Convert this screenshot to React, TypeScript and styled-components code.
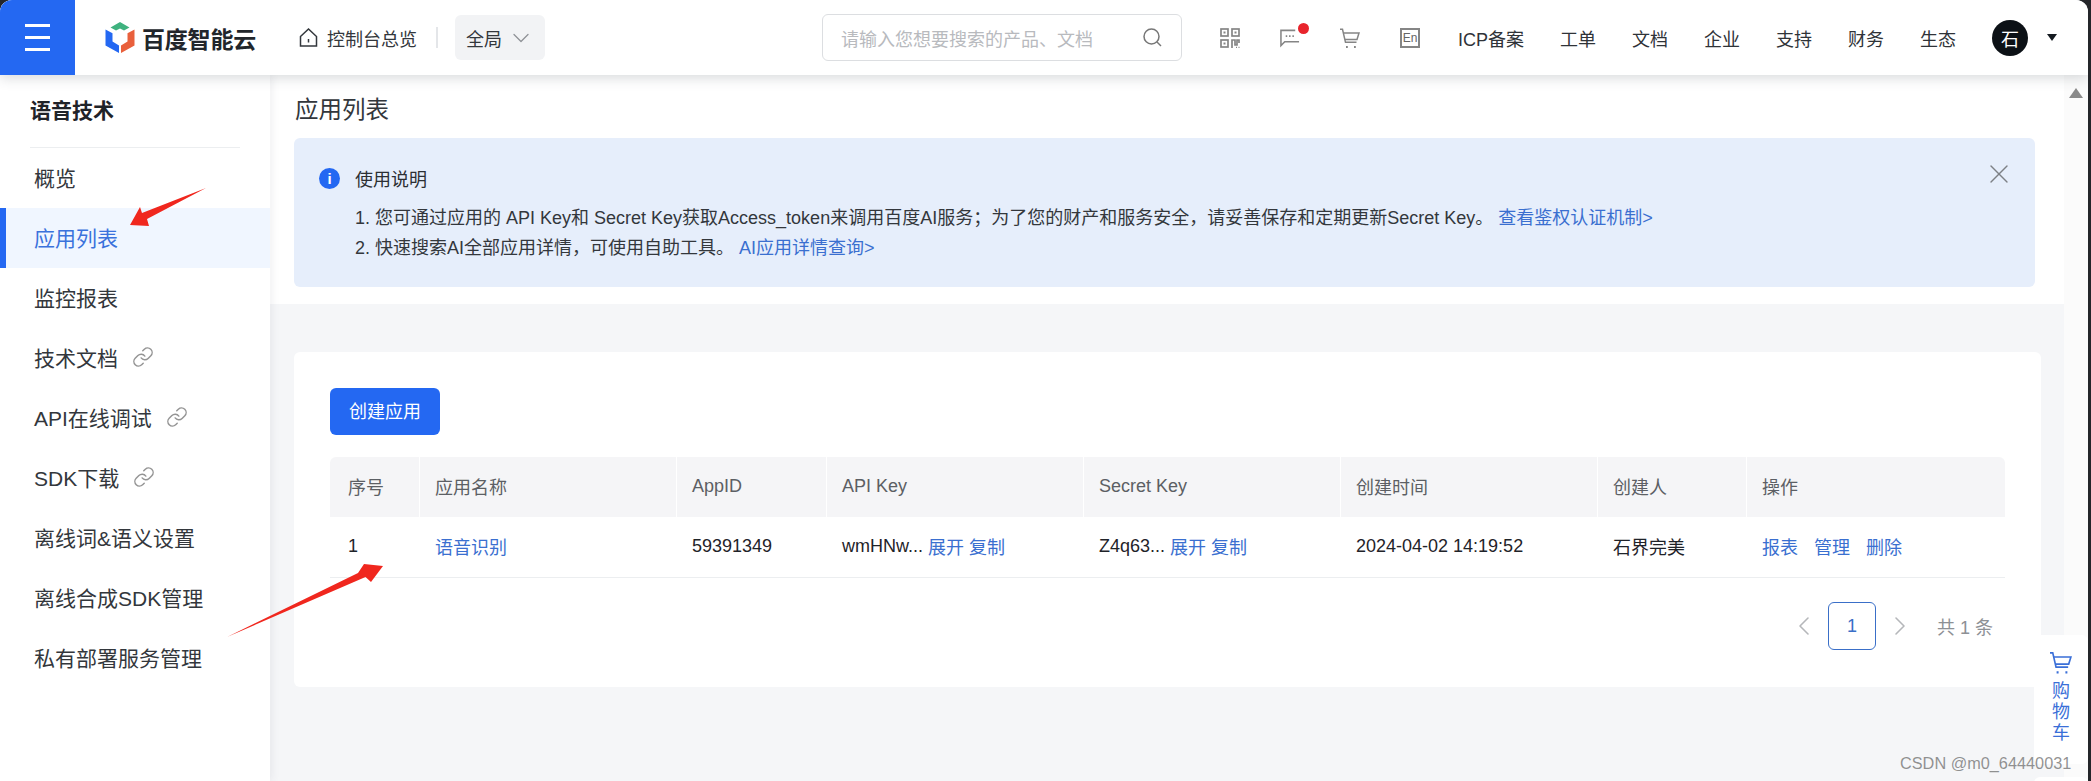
import React from 'react';
import styled, { createGlobalStyle } from 'styled-components';
import { Link as LinkIcon, X, ChevronLeft, ChevronRight, ChevronDown } from 'lucide-react';

const Global = createGlobalStyle`
  html, body { margin: 0; padding: 0; background: #24262a; }
  #root { width: 2091px; height: 781px; overflow: hidden; }
  * { box-sizing: border-box; }
`;

const FONT = `"Liberation Sans", "Noto Sans CJK SC", sans-serif`;
const BLUE = '#2468f2';
const LINK = '#3a6fd0';
const TEXT = '#2c2f33';

const Page = styled.div`
  position: relative;
  width: 2088px;
  height: 781px;
  display: flex;
  flex-direction: column;
  overflow: hidden;
  border-radius: 12px 12px 0 0;
  font-family: ${FONT};
  color: ${TEXT};
  background: #f5f6f8;
`;

const Header = styled.header`
  position: relative;
  z-index: 3;
  flex: 0 0 75px;
  display: flex;
  align-items: center;
  background: #fff;
  box-shadow: 0 3px 12px rgba(60, 70, 80, 0.2);
`;

const Burger = styled.div`
  width: 75px;
  height: 75px;
  background: ${BLUE};
  display: flex;
  flex-direction: column;
  justify-content: center;
  gap: 9px;
  padding: 0 25px;
`;

const BurgerLine = styled.span`
  display: block;
  height: 3px;
  background: #fff;
`;

const Brand = styled.div`
  display: flex;
  align-items: center;
  margin-left: 30px;
  gap: 7px;
  width: 160px;
`;

const BrandText = styled.span`
  font-size: 23px;
  font-weight: 700;
  color: #22262b;
  white-space: nowrap;
  letter-spacing: -0.2px;
`;

const Overview = styled.div`
  display: flex;
  align-items: center;
  gap: 9px;
  margin-left: 34px;
  font-size: 18px;
  color: #33373c;
  white-space: nowrap;
`;

const VDivider = styled.span`
  width: 2px;
  height: 21px;
  background: #e4e6e9;
  margin-left: 19px;
`;

const Scope = styled.div`
  display: flex;
  align-items: center;
  width: 90px;
  height: 45px;
  margin-left: 17px;
  padding-left: 11px;
  gap: 5px;
  background: #f2f3f5;
  border-radius: 6px;
  font-size: 18px;
  color: #33373c;
`;

const Search = styled.div`
  display: flex;
  align-items: center;
  justify-content: space-between;
  width: 360px;
  height: 47px;
  margin-left: 277px;
  padding: 0 19px 0 18px;
  border: 1.5px solid #dcdee1;
  border-radius: 6px;
  font-size: 18px;
  color: #b8babe;
  white-space: nowrap;
`;

const ToolIcons = styled.div`
  display: flex;
  align-items: center;
  gap: 40px;
  margin-left: 38px;
`;

const ToolSlot = styled.div`
  position: relative;
  width: 20px;
  height: 20px;
  display: flex;
`;

const Dot = styled.span`
  position: absolute;
  left: 18px;
  top: -5px;
  width: 11px;
  height: 11px;
  border-radius: 50%;
  background: #e8242c;
`;

const EnBox = styled.span`
  width: 20px;
  height: 20px;
  border: 2px solid #858585;
  font-size: 12px;
  line-height: 16px;
  text-align: center;
  color: #666;
`;

const NavList = styled.nav`
  display: flex;
  align-items: center;
  gap: 36px;
  margin-left: 38px;
  font-size: 18px;
  color: #2f3338;
  white-space: nowrap;
`;

const Avatar = styled.div`
  width: 36px;
  height: 36px;
  margin-left: 36px;
  border-radius: 50%;
  background: #0c1116;
  color: #fff;
  font-size: 18px;
  display: flex;
  align-items: center;
  justify-content: center;
`;

const Caret = styled.span`
  width: 0;
  height: 0;
  margin-left: 19px;
  border-left: 5.5px solid transparent;
  border-right: 5.5px solid transparent;
  border-top: 7px solid #151a20;
`;

const Body = styled.div`
  flex: 1;
  min-height: 0;
  display: flex;
`;

const Sidebar = styled.aside`
  position: relative;
  z-index: 2;
  flex: 0 0 270px;
  background: #fff;
  box-shadow: 2px 0 8px rgba(60, 70, 90, 0.08);
`;

const SideTitle = styled.div`
  margin: 0 30px;
  height: 73px;
  line-height: 72px;
  font-size: 21px;
  font-weight: 700;
  color: #1f2329;
  border-bottom: 1.5px solid #eceef0;
`;

const SideItems = styled.ul`
  list-style: none;
  margin: 0;
  padding: 0;
`;

const SideItem = styled.li<{ $active?: boolean }>`
  display: flex;
  align-items: center;
  height: 60px;
  padding-left: ${(p) => (p.$active ? 28 : 34)}px;
  padding-bottom: 3px;
  gap: 14px;
  font-size: 21px;
  white-space: nowrap;
  color: ${(p) => (p.$active ? '#3a72dc' : '#33373c')};
  background: ${(p) => (p.$active ? '#f0f6ff' : 'transparent')};
  border-left: ${(p) => (p.$active ? `6px solid ${BLUE}` : 'none')};
`;

const Main = styled.main`
  flex: 1;
  min-width: 0;
  display: flex;
  flex-direction: column;
`;

const TopPanel = styled.section`
  height: 229px;
  padding: 0 29px 0 24px;
  background: #fff;
`;

const PageTitle = styled.h1`
  margin: 0 0 0 1px;
  height: 63px;
  line-height: 70px;
  font-size: 23.5px;
  font-weight: 400;
  color: #33373c;
`;

const Notice = styled.div`
  position: relative;
  height: 149px;
  padding: 26px 0 0 25px;
  background: #e6eefb;
  border-radius: 6px;
  font-size: 18px;
`;

const NoticeHead = styled.div`
  display: flex;
  align-items: center;
  gap: 15px;
  height: 28px;
`;

const InfoDot = styled.span`
  width: 21px;
  height: 21px;
  border-radius: 50%;
  background: ${BLUE};
  color: #fff;
  font-size: 15px;
  font-weight: 700;
  line-height: 21px;
  text-align: center;
`;

const NoticeBody = styled.div`
  margin: 11px 0 0 36px;
`;

const NoticeLine = styled.div`
  height: 30px;
  line-height: 30px;
  white-space: nowrap;
  color: #33373c;
`;

const Anchor = styled.a`
  color: ${LINK};
  text-decoration: none;
`;

const CloseBtn = styled.span`
  position: absolute;
  right: 20px;
  top: 20px;
  display: flex;
  color: #7d8085;
`;

const Card = styled.section`
  height: 335px;
  margin: 48px 23px 0 24px;
  padding: 36px 36px 0;
  background: #fff;
  border-radius: 6px;
  position: relative;
`;

const CreateBtn = styled.button`
  display: block;
  width: 110px;
  height: 47px;
  border: 0;
  padding: 0 0 3px;
  border-radius: 6px;
  background: ${BLUE};
  color: #fff;
  font-family: inherit;
  font-size: 18px;
`;

const Table = styled.div`
  margin-top: 22px;
  width: 1675px;
  font-size: 18px;
`;

const Row = styled.div`
  display: grid;
  grid-template-columns: 89px 257px 150px 257px 257px 257px 149px 259px;
`;

const HeadRow = styled(Row)`
  height: 60px;
  background: #f5f5f7;
  border-radius: 6px 6px 0 0;
  color: #5c5f64;
`;

const DataRow = styled(Row)`
  height: 61px;
  border-bottom: 1.5px solid #eceef0;
  color: #1f2329;
`;

const HeadCell = styled.div<{ $first?: boolean }>`
  display: flex;
  align-items: center;
  padding-left: ${(p) => (p.$first ? 18 : 15)}px;
  padding-bottom: 2px;
  border-left: ${(p) => (p.$first ? 'none' : '1.5px solid #fff')};
`;

const Cell = styled.div<{ $first?: boolean }>`
  display: flex;
  align-items: center;
  gap: 5px;
  white-space: nowrap;
  padding-left: ${(p) => (p.$first ? 18 : 16)}px;
  padding-bottom: 2px;
`;

const ActionCell = styled(Cell)`
  gap: 16px;
`;

const Pager = styled.div`
  display: flex;
  align-items: center;
  justify-content: flex-end;
  height: 48px;
  margin-top: 24px;
  color: #8d9095;
  font-size: 18px;
`;

const PagerArrow = styled.span`
  display: flex;
  color: #b5b7ba;
`;

const PageNo = styled.span`
  width: 48px;
  height: 48px;
  margin: 0 8px;
  border: 1.5px solid #3a6fc8;
  border-radius: 6px;
  color: #3a6fc8;
  display: flex;
  align-items: center;
  justify-content: center;
`;

const PagerTotal = styled.span`
  margin-left: 21px;
  margin-right: 12px;
  white-space: pre;
`;

const Gutter = styled.div`
  flex: 0 0 24px;
  background: #fbfbfb;
  display: flex;
  justify-content: center;
  padding-top: 13px;
`;

const ScrollUp = styled.span`
  width: 0;
  height: 0;
  border-left: 7.5px solid transparent;
  border-right: 7.5px solid transparent;
  border-bottom: 10px solid #8a8a8a;
`;

const FloatCart = styled.div`
  position: absolute;
  z-index: 4;
  left: 2034px;
  top: 635px;
  width: 54px;
  height: 129px;
  background: #fff;
  border-radius: 6px;
  display: flex;
  flex-direction: column;
  align-items: center;
  padding-top: 17px;
  color: #3a6fd8;
  font-size: 18px;
  line-height: 21px;
`;

const FloatText = styled.div`
  margin-top: 7px;
  width: 18px;
  text-align: center;
`;

const FloatNext = styled.div`
  position: absolute;
  z-index: 4;
  left: 2034px;
  top: 777px;
  width: 54px;
  height: 30px;
  background: #fff;
  border-radius: 6px;
`;

const Watermark = styled.div`
  position: absolute;
  z-index: 6;
  left: 1900px;
  top: 753px;
  font-size: 16.3px;
  line-height: 20px;
  color: rgba(110, 110, 110, 0.75);
  white-space: nowrap;
`;

const Annotations = styled.svg`
  position: absolute;
  z-index: 5;
  left: 0;
  top: 0;
  pointer-events: none;
`;

const Logo = () => (
  <svg width="30" height="33" viewBox="0 0 30 33">
    <path d="M15 1l9.500 5.500-5.500 3L15 7.500l-4 2-5.500-3z" fill="#3fb27f" />
    <path d="M.5 8.500l7 3.800v8.200l6.500 4V32L.5 24.500z" fill="#2468f2" />
    <path d="M29.500 8.500l-7 3.800v8.200L16 24.500V32l13.500-7.500z" fill="#e9603c" />
  </svg>
);

const HomeIcon = () => (
  <svg width="19" height="19" viewBox="0 0 19 19" fill="none" stroke="#33373c" strokeWidth="1.500">
    <path d="M1.500 8.500L9.500 1l8 7.500V18h-16z" />
    <path d="M9.500 11v3.500" />
  </svg>
);

const SearchIcon = () => (
  <svg width="19" height="19" viewBox="0 0 19 19" fill="none" stroke="#777" strokeWidth="1.500">
    <circle cx="8.500" cy="8.500" r="7.500" />
    <path d="M14 14l4 4" />
  </svg>
);

const QrIcon = () => (
  <svg width="20" height="20" viewBox="0 0 20 20" fill="none" stroke="#858585" strokeWidth="1.700">
    <rect x="1" y="1" width="7" height="7" />
    <rect x="12" y="1" width="7" height="7" />
    <rect x="1" y="12" width="7" height="7" />
    <path d="M12 20v-8h3v5h2v-5h2v3" />
    <path d="M16 19.500h1M18.500 19.500h1" />
    <rect x="3.500" y="3.500" width="2" height="2" fill="#858585" stroke="none" />
    <rect x="14.500" y="3.500" width="2" height="2" fill="#858585" stroke="none" />
    <rect x="3.500" y="14.500" width="2" height="2" fill="#858585" stroke="none" />
  </svg>
);

const ChatIcon = () => (
  <svg width="21" height="20" viewBox="0 0 21 20" fill="none" stroke="#858585" strokeWidth="1.600">
    <path d="M20 14H5l-4 4V2h15" />
    <path d="M6 8h1.600M9.500 8h1.600M13 8h1.600" strokeWidth="2" />
  </svg>
);

const CartIcon = ({ color, size }: { color: string; size: number }) => (
  <svg width={size} height={size} viewBox="0 0 20 20" fill="none" stroke={color} strokeWidth="1.500">
    <path d="M0 .8h2.500l3 13h11" />
    <path d="M3.500 4.500h15.500l-2 6.500H5" />
    <path d="M6 18.500h1.800M14 18.500h1.800" strokeWidth="2" />
  </svg>
);

const Chain = () => <LinkIcon size={22} color="#949494" strokeWidth={1.6} />;

const nav = ['ICP备案', '工单', '文档', '企业', '支持', '财务', '生态'];
const heads = ['序号', '应用名称', 'AppID', 'API Key', 'Secret Key', '创建时间', '创建人', '操作'];

export default function App() {
  return (
    <>
      <Global />
      <Page>
        <Header>
          <Burger>
            <BurgerLine />
            <BurgerLine />
            <BurgerLine />
          </Burger>
          <Brand>
            <Logo />
            <BrandText>百度智能云</BrandText>
          </Brand>
          <Overview>
            <HomeIcon />
            控制台总览
          </Overview>
          <VDivider />
          <Scope>
            全局
            <ChevronDown size={28} color="#8f9297" strokeWidth={1.1} />
          </Scope>
          <Search>
            请输入您想要搜索的产品、文档
            <SearchIcon />
          </Search>
          <ToolIcons>
            <ToolSlot><QrIcon /></ToolSlot>
            <ToolSlot><ChatIcon /><Dot /></ToolSlot>
            <ToolSlot><CartIcon color="#858585" size={21} /></ToolSlot>
            <ToolSlot><EnBox>En</EnBox></ToolSlot>
          </ToolIcons>
          <NavList>
            {nav.map((n) => (
              <span key={n}>{n}</span>
            ))}
          </NavList>
          <Avatar>石</Avatar>
          <Caret />
        </Header>
        <Body>
          <Sidebar>
            <SideTitle>语音技术</SideTitle>
            <SideItems>
              <SideItem>概览</SideItem>
              <SideItem $active>应用列表</SideItem>
              <SideItem>监控报表</SideItem>
              <SideItem>技术文档<Chain /></SideItem>
              <SideItem>API在线调试<Chain /></SideItem>
              <SideItem>SDK下载<Chain /></SideItem>
              <SideItem>离线词&amp;语义设置</SideItem>
              <SideItem>离线合成SDK管理</SideItem>
              <SideItem>私有部署服务管理</SideItem>
            </SideItems>
          </Sidebar>
          <Main>
            <TopPanel>
              <PageTitle>应用列表</PageTitle>
              <Notice>
                <NoticeHead>
                  <InfoDot>i</InfoDot>
                  使用说明
                </NoticeHead>
                <NoticeBody>
                  <NoticeLine>
                    1. 您可通过应用的 API Key和 Secret Key获取Access_token来调用百度AI服务；为了您的财产和服务安全，请妥善保存和定期更新Secret Key。{' '}
                    <Anchor>查看鉴权认证机制&gt;</Anchor>
                  </NoticeLine>
                  <NoticeLine>
                    2. 快速搜索AI全部应用详情，可使用自助工具。 <Anchor>AI应用详情查询&gt;</Anchor>
                  </NoticeLine>
                </NoticeBody>
                <CloseBtn><X size={32} strokeWidth={1} /></CloseBtn>
              </Notice>
            </TopPanel>
            <Card>
              <CreateBtn>创建应用</CreateBtn>
              <Table>
                <HeadRow>
                  {heads.map((h, i) => (
                    <HeadCell key={h} $first={i === 0}>{h}</HeadCell>
                  ))}
                </HeadRow>
                <DataRow>
                  <Cell $first>1</Cell>
                  <Cell><Anchor>语音识别</Anchor></Cell>
                  <Cell>59391349</Cell>
                  <Cell>wmHNw...<Anchor>展开</Anchor><Anchor>复制</Anchor></Cell>
                  <Cell>Z4q63...<Anchor>展开</Anchor><Anchor>复制</Anchor></Cell>
                  <Cell>2024-04-02 14:19:52</Cell>
                  <Cell>石界完美</Cell>
                  <ActionCell>
                    <Anchor>报表</Anchor>
                    <Anchor>管理</Anchor>
                    <Anchor>删除</Anchor>
                  </ActionCell>
                </DataRow>
                <Pager>
                  <PagerArrow><ChevronLeft size={32} strokeWidth={1.2} /></PagerArrow>
                  <PageNo>1</PageNo>
                  <PagerArrow><ChevronRight size={32} strokeWidth={1.2} /></PagerArrow>
                  <PagerTotal>共 1 条</PagerTotal>
                </Pager>
              </Table>
            </Card>
          </Main>
          <Gutter><ScrollUp /></Gutter>
        </Body>
        <FloatCart>
          <CartIcon color="#3a6fd8" size={22} />
          <FloatText>购物车</FloatText>
        </FloatCart>
        <FloatNext />
        <Annotations width="2088" height="781" viewBox="0 0 2088 781">
          <path d="M206 188L142 213l-2-6-10 18 19 1-2-7z" fill="#f0271e" />
          <path d="M227 637L358 573l6-9 19 2-12 16-5.500-5z" fill="#f0271e" />
        </Annotations>
        <Watermark>CSDN @m0_64440031</Watermark>
      </Page>
    </>
  );
}
